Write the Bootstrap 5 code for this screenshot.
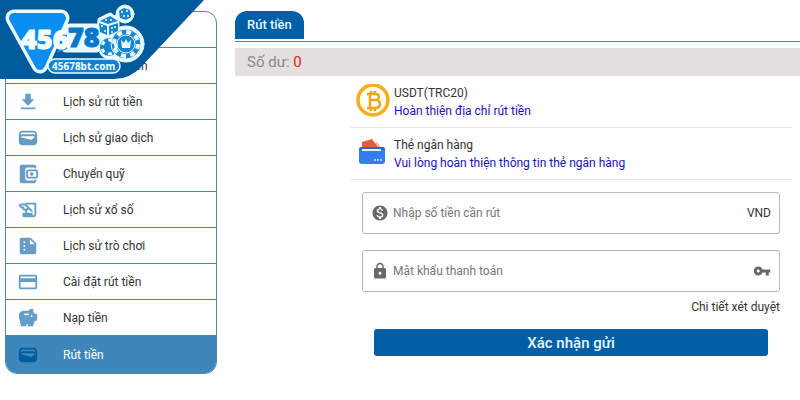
<!DOCTYPE html>
<html lang="vi">
<head>
<meta charset="utf-8">
<meta name="viewport" content="width=device-width, initial-scale=1">
<title>Rút tiền</title>
<link href="https://cdn.jsdelivr.net/npm/bootstrap@5.3.0/dist/css/bootstrap.min.css" rel="stylesheet">
<style>
  :root { --brand: #005fa5; --line: #4b8aa8; }
  body { font-family: Roboto, "Noto Sans", sans-serif; font-size: 12px; line-height: 18px; color: #333; background: #fff; }
  .brand-ribbon { position: absolute; top: 0; left: 0; z-index: 2; display: block; line-height: 0; }
  .side-menu { flex: 0 0 212px; margin: 11px 18px 0 5px; border: 1px solid var(--line); border-radius: 12px; overflow: hidden; }
  .side-link { display: flex; align-items: center; gap: 24px; height: 36px; padding-left: 11px; color: #333; text-decoration: none; border-bottom: 1px solid var(--line); }
  .side-link svg { width: 22px; height: 22px; fill: #649dc5; flex: none; }
  .side-link.current { height: 37px; background: #3e87bb; color: #fff; border-bottom: 0; }
  .side-link.current svg { fill: #005d9f; }
  .main-pane { padding-top: 11px; min-width: 0; }
  .tab-strip { border-bottom: 1px solid #4d88ae; padding-bottom: 2px; }
  .tab-btn { background: var(--brand); color: #e6f7ff; border: 0; border-radius: 12px 12px 0 0; height: 28px; padding: 0 12px; font-size: 13px; font-weight: 500; }
  .balance { margin-top: 6px; height: 28px; padding-left: 12px; background: #e5e0df; color: #888; font-size: 15px; }
  .balance strong { font-weight: 400; color: #e02020; }
  .pay-area { margin: 0 8px 0 115px; }
  .pay-row { height: 52px; border-bottom: 1px solid #e4e4e4; padding: 0 4px; gap: 4px; }
  .pay-row a { color: #1a12b8; text-decoration: none; }
  .pay-row svg { width: 36px; height: 36px; flex: none; }
  .pay-form { padding: 12px 12px 0; }
  .field { height: 42px; border: 1px solid #b8b8b8; border-radius: 3px; padding: 0 8px; gap: 4px; }
  .field svg { width: 18px; height: 18px; fill: #686868; flex: none; }
  .field input { border: 0; outline: 0; background: none; flex: 1; min-width: 0; padding: 0; color: #333; }
  .field input::placeholder { color: #777; opacity: 1; }
  .detail-row { margin-top: 6px; }
  .detail-link { color: #333; text-decoration: none; }
  .submit-btn { display: block; width: calc(100% - 24px); margin: 13px 12px 0; height: 27px; border: 0; border-radius: 3px; background: var(--brand); color: #e6f7ff; font-size: 15px; font-weight: 500; }
</style>
</head>
<body>
<a class="brand-ribbon" href="#" aria-label="45678bt.com">
<svg width="204" height="80" viewBox="0 0 204 80">
  <path d="M0 0H204L141 67Q130 79 114 79H0Z" fill="#005b9d"/>
  <g stroke="#e9fbff" stroke-linejoin="round" stroke-linecap="round">
    <path d="M14 18H61L40 65Z" fill="#e9fbff" stroke-width="17"/>
    <path d="M100 20L110 15L117 21V33L106 36L99 32Z" fill="#e9fbff" stroke-width="5"/>
    <circle cx="125" cy="14" r="9" fill="#e9fbff"/>
    <circle cx="112" cy="46" r="14" fill="#e9fbff"/><circle cx="126" cy="44" r="18" fill="#e9fbff"/>
    <path d="M116 18l8-5" stroke-width="6"/>
    <path d="M70 29H96M74 29L66 47H96V29Z" fill="#e9fbff" stroke-width="11"/>
    <path d="M14 18H61L40 65Z" fill="#0c8df0" stroke="#0c8df0" stroke-width="10"/>
  </g>
  <g fill="#1686d2">
    <path d="M100 21L110 16L118 21L108 24Z"/><path d="M99 23L107 26V35L100 32Z"/><path d="M109 26L118 23V31L109 35Z"/>
    <path d="M119 11l5-3 6 2 1 7-5 3-6-2z"/>
    <circle cx="109" cy="47" r="9"/><circle cx="126" cy="44" r="15"/>
  </g>
  <g fill="#e9fbff">
    <circle cx="106" cy="20" r="1"/><circle cx="111" cy="20" r="1"/><circle cx="102" cy="26" r="1"/><circle cx="105" cy="31" r="1"/><circle cx="112" cy="28" r="1"/><circle cx="115" cy="27" r="1"/><circle cx="112" cy="32" r="1"/>
    <circle cx="122" cy="12" r="1"/><circle cx="127" cy="11" r="1"/><circle cx="124" cy="16" r="1"/><circle cx="128" cy="16" r="1"/>
  </g>
  <g fill="none" stroke="#e9fbff">
    <circle cx="109" cy="47" r="7" stroke-width="3" stroke-dasharray="4 4"/>
    <circle cx="126" cy="44" r="15"/>
    <circle cx="126" cy="44" r="12" stroke-width="4" stroke-dasharray="5 4.4"/>
    <circle cx="126" cy="44" r="9"/>
  </g>
  <path d="M121 40l3 3 2-4 2 4 3-3-1 8h-8z" fill="#e9fbff"/>
  <path d="M62 36L67 31V49L57 53Z" fill="#0c8df0"/>
  <g font-family="'Open Sans', sans-serif" font-weight="800" font-size="27" stroke-width="1" stroke-linejoin="round">
    <text x="68" y="47" fill="#0877c9" stroke="#0877c9">78</text>
    <text x="21" y="49" fill="#f4feff" stroke="#f4feff">456</text>
  </g>
  <rect x="48" y="59" width="72" height="14" rx="7" fill="#1283d4" stroke="#e9fbff" stroke-width="1.5"/>
  <text x="52" y="70" font-family="'Noto Sans', sans-serif" font-size="10" font-weight="700" fill="#f4feff">45678bt.com</text>
</svg></a>
<div class="d-flex align-items-start">
  <nav class="side-menu" aria-label="Tài khoản">
    <a class="side-link" href="#" aria-label="Tài khoản"></a>
    <a class="side-link" href="#"><svg viewBox="0 0 24 24"><path d="M5 20h14v-2H5v2zM19 9h-4V3H9v6H5l7 7 7-7z"/></svg>Lịch sử nạp tiền</a>
    <a class="side-link" href="#"><svg viewBox="0 0 24 24"><path d="M4 20h16v-2H4v2zM19 9h-4V3H9v6H5l7 7 7-7z"/></svg>Lịch sử rút tiền</a>
    <a class="side-link" href="#"><svg viewBox="0 0 24 24"><path d="M18 4H6C3.79 4 2 5.79 2 8v8c0 2.21 1.79 4 4 4h12c2.21 0 4-1.79 4-4V8c0-2.21-1.79-4-4-4zm-1.86 9.77c-.24.2-.57.28-.88.2L4.15 11.25C4.45 10.52 5.16 10 6 10h12c.67 0 1.26.34 1.63.84l-3.49 2.93zM6 6h12c1.1 0 2 .9 2 2v.55c-.59-.34-1.27-.55-2-.55H6c-.73 0-1.41.21-2 .55V8c0-1.1.9-2 2-2z"/></svg>Lịch sử giao dịch</a>
    <a class="side-link" href="#"><svg viewBox="0 0 24 24"><path fill-rule="evenodd" d="M5 2h14q2 0 2 2v2h-2V5h-8q-2 0-2 2v10q0 2 2 2h8v-1h2v2q0 2-2 2H5q-2 0-2-2V4q0-2 2-2zM12 7h9q2 0 2 2v6q0 2-2 2h-9q-2 0-2-2V9q0-2 2-2zm0 2v6h9V9zm4 1a2 2 0 1 1 0 4 2 2 0 0 1 0-4z"/></svg>Chuyển quỹ</a>
    <a class="side-link" href="#"><svg viewBox="0 0 24 24"><path d="M9 4v1.38c-.83-.33-1.72-.5-2.61-.5-1.79 0-3.58.68-4.95 2.05l3.33 3.33h1.11v1.11c.86.86 1.98 1.31 3.11 1.36V15H6v3c0 1.1.9 2 2 2h10c1.66 0 3-1.34 3-3V4H9zm-1.11 6.41V8.26H5.61L4.57 7.22a5.07 5.07 0 0 1 1.82-.34c1.34 0 2.59.52 3.54 1.46l1.41 1.41-.2.2a2.7 2.7 0 0 1-1.92.8c-.47 0-.93-.12-1.33-.34zM19 17c0 .55-.45 1-1 1s-1-.45-1-1v-2h-6v-2.41c.57-.23 1.1-.57 1.56-1.03l.2-.2L15.59 14H17v-1.41l-6-5.97V6h8v11z"/></svg>Lịch sử xổ số</a>
    <a class="side-link" href="#"><svg viewBox="0 0 24 24"><path fill-rule="evenodd" d="M15 3H5c-1.1 0-2 .9-2 2v14c0 1.1.9 2 2 2h14c1.1 0 2-.9 2-2V9l-6-6zM8 17a1 1 0 1 1 0-2 1 1 0 0 1 0 2zm0-4a1 1 0 1 1 0-2 1 1 0 0 1 0 2zm0-4a1 1 0 1 1 0-2 1 1 0 0 1 0 2zm6 1V4.5l5.5 5.5H14z"/></svg>Lịch sử trò chơi</a>
    <a class="side-link" href="#"><svg viewBox="0 0 24 24"><path d="M20 4H4c-1.11 0-1.99.89-1.99 2L2 18c0 1.11.89 2 2 2h16c1.11 0 2-.89 2-2V6c0-1.11-.89-2-2-2zm0 14H4v-6h16v6zm0-10H4V6h16v2z"/></svg>Cài đặt rút tiền</a>
    <a class="side-link" href="#"><svg viewBox="0 0 24 24"><path d="m19.83 7.5-2.27-2.27c.07-.42.18-.81.32-1.15.08-.18.12-.37.12-.58 0-.83-.67-1.5-1.5-1.5-1.64 0-3.09.79-4 2h-5C4.46 4 2 6.46 2 9.5S4.5 21 4.5 21H10v-2h2v2h5.5l1.68-5.59 2.82-.94V7.5h-2.17zM13 9H8V7h5v2zm3 2c-.55 0-1-.45-1-1s.45-1 1-1 1 .45 1 1-.45 1-1 1z"/></svg>Nạp tiền</a>
    <a class="side-link current" href="#" aria-current="page"><svg viewBox="0 0 24 24"><path d="M18 4H6C3.79 4 2 5.79 2 8v8c0 2.21 1.79 4 4 4h12c2.21 0 4-1.79 4-4V8c0-2.21-1.79-4-4-4zm-1.86 9.77c-.24.2-.57.28-.88.2L4.15 11.25C4.45 10.52 5.16 10 6 10h12c.67 0 1.26.34 1.63.84l-3.49 2.93zM6 6h12c1.1 0 2 .9 2 2v.55c-.59-.34-1.27-.55-2-.55H6c-.73 0-1.41.21-2 .55V8c0-1.1.9-2 2-2z"/></svg>Rút tiền</a>
  </nav>
  <main class="main-pane flex-grow-1">
    <div class="tab-strip d-flex"><button type="button" class="tab-btn">Rút tiền</button></div>
    <div class="balance d-flex align-items-center"><span>Số dư: <strong>0</strong></span></div>
    <div class="pay-area">
      <div class="pay-row d-flex align-items-center">
        <svg viewBox="0 0 36 36" aria-hidden="true">
          <circle cx="19" cy="16" r="15" fill="#fffdf2" stroke="#f3ae24" stroke-width="3.5"/>
          <path d="M13 10h8q4 0 4 3 0 2-2 3 3 1 3 4 0 4-5 4h-8M16 10v14M16 16h6M17 7v3M21 7v3M17 24v3M21 24v3" fill="none" stroke="#f0a51c" stroke-width="2.5"/>
        </svg>
        <div><div>USDT(TRC20)</div><a href="#">Hoàn thiện địa chỉ rút tiền</a></div>
      </div>
      <div class="pay-row d-flex align-items-center">
        <svg viewBox="0 0 36 36" aria-hidden="true">
          <path d="M8 12l15-6 6 8z" fill="#f7b5a2"/>
          <path d="M8 6l10-3 8 11H8z" fill="#e75a3c"/>
          <rect x="5" y="11" width="26" height="17" rx="3" fill="#347df0"/>
          <path d="M5 14q0-3 3-3h20q3 0 3 3z" fill="#2668d8"/>
          <path d="M8 14h19" stroke="#e8f4ff" stroke-width="2"/>
          <path d="M20 24h8" stroke="#cfe5ff" stroke-width="1.5" stroke-dasharray="2 1"/>
        </svg>
        <div><div>Thẻ ngân hàng</div><a href="#">Vui lòng hoàn thiện thông tin thẻ ngân hàng</a></div>
      </div>
      <form class="pay-form">
        <div class="field d-flex align-items-center mb-3">
          <svg viewBox="0 0 24 24" aria-hidden="true"><path d="M12 2C6.48 2 2 6.48 2 12s4.48 10 10 10 10-4.48 10-10S17.52 2 12 2zm1.41 16.09V20h-2.67v-1.93c-1.71-.36-3.16-1.46-3.27-3.4h1.96c.1 1.05.82 1.87 2.65 1.87 1.96 0 2.4-.98 2.4-1.59 0-.83-.44-1.61-2.67-2.14-2.48-.6-4.18-1.62-4.18-3.67 0-1.72 1.39-2.84 3.11-3.21V4h2.67v1.95c1.86.45 2.79 1.86 2.85 3.39H14.3c-.05-1.11-.64-1.87-2.22-1.87-1.5 0-2.4.68-2.4 1.64 0 .84.65 1.39 2.67 1.91s4.18 1.39 4.18 3.91c-.01 1.83-1.38 2.83-3.12 3.16z"/></svg>
          <input type="text" aria-label="Nhập số tiền cần rút" placeholder="Nhập số tiền cần rút"><span>VND</span>
        </div>
        <div class="field d-flex align-items-center">
          <svg viewBox="0 0 24 24" aria-hidden="true"><path d="M18 8h-1V6c0-2.76-2.24-5-5-5S7 3.24 7 6v2H6c-1.1 0-2 .9-2 2v10c0 1.1.9 2 2 2h12c1.1 0 2-.9 2-2V10c0-1.1-.9-2-2-2zm-6 9c-1.1 0-2-.9-2-2s.9-2 2-2 2 .9 2 2-.9 2-2 2zm3.1-9H8.9V6c0-1.71 1.39-3.1 3.1-3.1 1.71 0 3.1 1.39 3.1 3.1v2z"/></svg>
          <input type="password" aria-label="Mật khẩu thanh toán" placeholder="Mật khẩu thanh toán">
          <svg viewBox="0 0 24 24" aria-hidden="true"><path d="M12.65 10C11.83 7.67 9.61 6 7 6c-3.31 0-6 2.69-6 6s2.69 6 6 6c2.61 0 4.83-1.67 5.65-4H17v4h4v-4h2v-4H12.65zM7 14c-1.1 0-2-.9-2-2s.9-2 2-2 2 .9 2 2-.9 2-2 2z"/></svg>
        </div>
        <div class="detail-row text-end"><a class="detail-link" href="#">Chi tiết xét duyệt</a></div>
        <button type="submit" class="submit-btn">Xác nhận gửi</button>
      </form>
    </div>
  </main>
</div>
<script src="https://cdn.jsdelivr.net/npm/bootstrap@5.3.0/dist/js/bootstrap.bundle.min.js"></script>
</body>
</html>
